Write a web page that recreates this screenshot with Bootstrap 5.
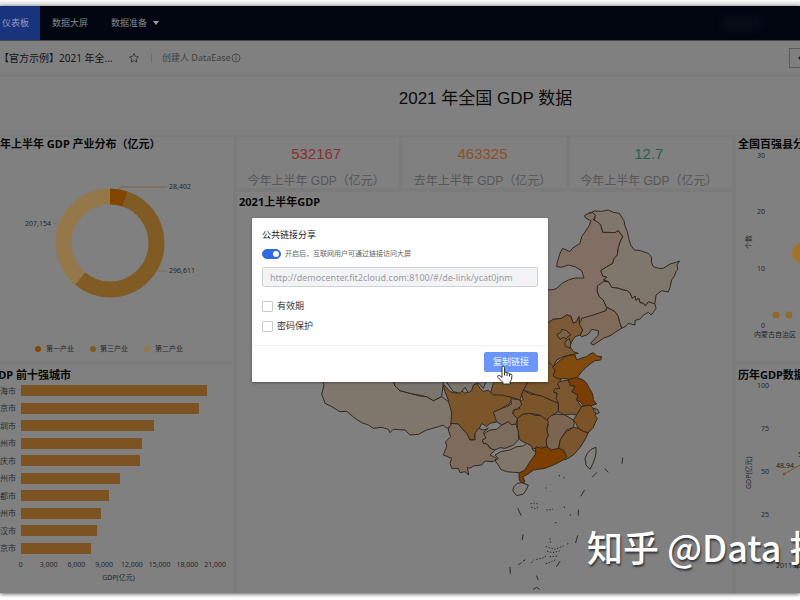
<!DOCTYPE html>
<html lang="zh-CN">
<head>
<meta charset="utf-8">
<meta name="viewport" content="width=device-width, initial-scale=1">
<title>2021 年全国 GDP 数据</title>
<link href="https://cdn.jsdelivr.net/npm/bootstrap@5.3.0/dist/css/bootstrap.min.css" rel="stylesheet">
<style>
body{font-family:"Noto Sans","Noto Sans CJK SC",sans-serif;font-size:9px;line-height:14px;background:#fff;color:#1c1c1c}
.app-shell{overflow:hidden;min-height:100vh;padding:6px 0;background:linear-gradient(#fdfdfd,#d9d9d9 6px,#fff 7px)}
.app-frame{background:#7b7b7b;box-shadow:0 1px 4px #555}
.topbar{background:#020611;height:35px;border-bottom:1px solid #45474c}
.topbar a{color:#84868b;text-decoration:none;height:34px}
.topbar .tab-on{background:#17347c;color:#8c9cc4;width:40px;padding-left:2px}
.topbar .tab-screen{padding-left:12px}
.topbar .tab-prep{padding-left:23px}
.caret{width:0;height:0;border:3px solid transparent;border-top:4px solid #9a9a9a;border-bottom:0;margin-left:6px}
.user-name{width:36px;height:10px;background:#0c101b;filter:blur(4px);margin-right:40px}
.toolbar{background:#808080;height:33px;margin-bottom:3px}
.board-name{font-size:10px;color:#141414;margin-left:-1px;width:124px}
.split{width:1px;height:10px;background:#6d6d6d;margin:0 10px 0 10px}
.author{color:#404040;letter-spacing:normal}
.tool-btn{width:30px;height:20px;border:1px solid #5c5c5c;background:transparent;margin-right:-19px;padding:0;color:#222}
.board-title{background:#808080;height:57px;margin:0 0 3px;font:17px/44px "Liberation Sans","Noto Sans CJK SC",sans-serif;color:#0c0c0c;padding-left:171px}
.board{display:grid;grid-template-columns:minmax(0,233fr) minmax(0,495fr) minmax(0,64fr);gap:4px}
.panel{background:#808080;overflow:hidden}
.panel svg{display:block;width:100%;height:auto}
.panel h2{font-size:11px;line-height:14px;font-weight:700;color:#080808;margin:0;white-space:nowrap}
.pad-top{padding-top:3px}
.indent{padding-left:2px}
.cut{display:flex;justify-content:flex-end;overflow:hidden;white-space:nowrap}
.h-cities{width:71px}
.kpi{height:51px;text-align:center;font-family:"Liberation Sans","Noto Sans CJK SC",sans-serif;padding:8px 4px 0 0}
.kpi b{display:block;font-size:15px;line-height:18px;font-weight:400}
.kpi span{display:block;font-size:12px;line-height:18px;margin-top:9px;color:#565656;white-space:nowrap}
.c-red{color:#88302c}.c-orange{color:#8d5125}.c-green{color:#1f6350}
.bars{height:175px;font-size:8px}
.bars .city{width:16px;margin-right:5px;color:#2a2a2a}
.bars .track{flex:1;margin-right:18px}
.bars .fill{height:11px;background:#7d5321}
.ticks{margin:1px 4px 0 7px;font-size:7px;color:#262626}
.ticks span{flex:1 1 0;text-align:center}
.axis-name{font-size:7px;color:#262626;line-height:12px;padding:0 0 9px 4px}
svg text{font-size:7px;fill:#262626}
.share-layer{position:absolute;top:0;left:0;width:100%;padding-top:218px}
.share{width:296px;background:#fff;color:#333;box-shadow:0 1px 3px rgba(0,0,0,.4);border-radius:1px}
.share-body{padding:10px 10px 0}
.share h1{font-size:9px;line-height:14px;font-weight:400;margin:0;color:#222}
.share .form-check-input{margin:0;flex:none}
.share .form-switch{padding:0;min-height:0;margin:5px 0 6px}
.share .form-switch .form-check-input{width:19px;height:10px;background-color:#3068e4;border-color:#3068e4}
.hint{font-size:7px;color:#666;margin-left:4px}
.share .form-control{font-size:9px;line-height:12px;height:20px;padding:0 7px;border-radius:2px;color:#999ca3;background:#f2f3f5;border-color:#cfd1d5;font-family:"Noto Sans",sans-serif}
.checks{margin-top:12px}
.checks .form-check{padding:0;min-height:0;margin:0 0 6px}
.checks .form-check-input{width:11px;height:11px;border-radius:1px;border-color:#c8cad0}
.checks label{margin-left:4px}
.share-foot{border-top:1px solid #f0f0f0;padding:6px 10px 10px;margin-top:12px}
.share .btn{font-size:9px;line-height:18px;padding:0 8px;border-radius:2px;background:#6b95f7;border-color:#6b95f7;color:#f1f5ff}
.pointer{position:absolute;left:12px;top:13px;width:17px;height:20px}
.stamp{position:absolute;right:0;bottom:27px;width:213px;height:54px;overflow:hidden;white-space:nowrap;color:#fff;font:500 36px/54px "Noto Sans CJK SC",sans-serif;text-shadow:1px 2px 2px rgba(0,0,0,.6)}
</style>
<script src="https://cdn.jsdelivr.net/npm/bootstrap@5.3.0/dist/js/bootstrap.bundle.min.js"></script>
</head>
<body>
<div class="app-shell position-relative">
<div class="app-frame">
  <nav class="topbar d-flex align-items-center">
    <a href="#" class="tab-on d-flex align-items-center text-nowrap">仪表板</a>
    <a href="#" class="tab-screen d-flex align-items-center">数据大屏</a>
    <a href="#" class="tab-prep d-flex align-items-center">数据准备<i class="caret"></i></a>
    <div class="user-name ms-auto"></div>
  </nav>
  <header class="toolbar d-flex align-items-center">
    <div class="board-name text-nowrap">【官方示例】2021 年全...</div>
    <svg class="ms-1 me-0" width="14" height="12" viewBox="0 0 14 12" fill="none" stroke="#3c3c3c"><path d="M7 1.5l1.400 2.900 3.100.4-2.200 2.200.5 3.100L7 8.600l-2.800 1.500.5-3.100-2.200-2.200 3.100-.4z"/></svg>
    <i class="split"></i>
    <div class="author text-nowrap">创建人 DataEase</div>
    <svg style="margin-left:0" width="10" height="10" viewBox="0 0 10 10" fill="none" stroke="#444" stroke-width=".9"><circle cx="5" cy="5" r="4"/><path d="M5 4.300v3M5 2.400v1"/></svg>
    <button type="button" class="tool-btn ms-auto" aria-label="收起"><svg width="12" height="10" viewBox="0 0 12 10" fill="none" stroke="#222" stroke-width="1.400"><path d="M4 2L1 5l3 3"/></svg></button>
  </header>
  <div class="board-title text-center">2021 年全国 GDP 数据</div>

  <main class="board">
    <div class="d-flex flex-column gap-1">
      <section class="panel">
        <h2>年上半年 GDP 产业分布（亿元）</h2>
        <svg viewBox="0 151 233 210" role="img" aria-label="产业分布">
          <g fill="none" stroke-width="16" transform="rotate(-90 110 243)">
            <circle cx="110" cy="243" r="46.5" stroke="#94784a" pathLength="100" stroke-dasharray="39 61" stroke-dashoffset="-61"/>
            <circle cx="110" cy="243" r="46.5" stroke="#805b24" pathLength="100" stroke-dasharray="55.8 44.2" stroke-dashoffset="-5.3"/>
            <circle cx="110" cy="243" r="46.5" stroke="#824600" pathLength="100" stroke-dasharray="5.3 94.7"/>
          </g>
          <path d="M118 189l4-2h45" stroke="#805438" fill="none" stroke-width=".7"/>
          <path d="M157 271h10M53 223l4 1" stroke="#806b48" fill="none" stroke-width=".7"/>
          <text x="169" y="189">28,402</text><text x="25" y="226">207,154</text><text x="169" y="273">296,611</text>
          <circle cx="38" cy="349" r="3" fill="#824600"/><circle cx="93" cy="349" r="3" fill="#805b24"/><circle cx="147" cy="349" r="3" fill="#94784a"/>
          <text x="46" y="351">第一产业</text><text x="100" y="351">第三产业</text><text x="155" y="351">第二产业</text>
        </svg>
      </section>
      <section class="panel pad-top flex-grow-1">
        <h2 class="cut h-cities">GDP 前十强城市</h2>
        <div class="bars d-flex flex-column justify-content-around">
          <div class="d-flex align-items-center"><span class="city cut">上海市</span><div class="track"><div class="fill" style="width:95.7%"></div></div></div>
          <div class="d-flex align-items-center"><span class="city cut">北京市</span><div class="track"><div class="fill" style="width:91.6%"></div></div></div>
          <div class="d-flex align-items-center"><span class="city cut">深圳市</span><div class="track"><div class="fill" style="width:68.4%"></div></div></div>
          <div class="d-flex align-items-center"><span class="city cut">广州市</span><div class="track"><div class="fill" style="width:62.3%"></div></div></div>
          <div class="d-flex align-items-center"><span class="city cut">重庆市</span><div class="track"><div class="fill" style="width:61.5%"></div></div></div>
          <div class="d-flex align-items-center"><span class="city cut">苏州市</span><div class="track"><div class="fill" style="width:50.8%"></div></div></div>
          <div class="d-flex align-items-center"><span class="city cut">成都市</span><div class="track"><div class="fill" style="width:45.6%"></div></div></div>
          <div class="d-flex align-items-center"><span class="city cut">杭州市</span><div class="track"><div class="fill" style="width:41.1%"></div></div></div>
          <div class="d-flex align-items-center"><span class="city cut">武汉市</span><div class="track"><div class="fill" style="width:39.1%"></div></div></div>
          <div class="d-flex align-items-center"><span class="city cut">南京市</span><div class="track"><div class="fill" style="width:36.2%"></div></div></div>
        </div>
        <div class="ticks d-flex"><span>0</span><span>3,000</span><span>6,000</span><span>9,000</span><span>12,000</span><span>15,000</span><span>18,000</span><span>21,000</span></div>
        <div class="axis-name text-center">GDP(亿元)</div>
      </section>
    </div>

    <div class="d-flex flex-column gap-1">
      <div class="d-flex gap-1">
        <div class="panel kpi flex-fill"><b class="c-red">532167</b><span>今年上半年 GDP（亿元）</span></div>
        <div class="panel kpi flex-fill"><b class="c-orange">463325</b><span>去年上半年 GDP（亿元）</span></div>
        <div class="panel kpi flex-fill"><b class="c-green">12.7</b><span>今年上半年 GDP（亿元）</span></div>
      </div>
      <section class="panel pad-top flex-grow-1">
        <h2 class="indent">2021上半年GDP</h2>
        <svg viewBox="711 627 1485 1149" role="img" aria-label="2021上半年GDP 地图">
          <g stroke="#33291e" stroke-width="3" stroke-linejoin="round">
            <g transform="translate(1620 600)">
              <path fill="#80776c" d="M146 40L165 33 185 34 205 30 220 37 238 40 252 62 255 78 262 95 266 115 272 135 283 150 297 151 310 155 325 160 335 172 334 186 340 200 355 205 370 205 390 192 405 188 419 183 411 194 413 208 408 215 402 230 395 240 390 262 385 276 365 272 348 285 345 310 337 312 325 305 316 318 310 310 300 308 296 294 288 302 285 288 277 295 270 280 262 272 250 270 235 265 215 262 205 245 190 240 200 232 188 228 182 212 200 200 218 190 222 175 232 165 234 145 240 125 248 110 235 92 225 98 210 97 188 97 182 75 172 65 163 70 165 45Z"/>
              <path fill="#806f62" d="M138 55L133 47 146 40 158 38 167 46 160 60 172 65 182 75 188 97 225 98 235 92 248 110 240 125 234 145 232 165 222 175 218 190 200 200 182 212 188 228 200 232 190 240 205 245 190 255 172 258 172 275 178 290 190 300 200 322 198 332 180 340 160 345 140 353 125 358 126 375 118 372 117 350 110 365 100 370 92 348 80 345 65 355 40 358 22 370-60 400-60 310 0 290 22 270 40 269 50 265 68 249 85 240 105 234 132 234 125 212 105 200 85 195 65 202 50 200 52 185 60 160 68 145 90 155 97 145 120 130 125 110 138 92 148 76 153 62Z"/>
              <path fill="#80786e" d="M190 245L205 245 215 262 235 265 250 270 262 272 270 280 277 295 285 288 288 302 296 294 300 308 310 310 316 318 325 305 345 312 348 325 340 337 333 345 325 337 310 345 300 357 285 361 285 375 265 370 258 378 245 385 238 365 235 350 225 335 213 328 200 322 190 300 178 290 172 275 172 258Z"/>
              <path fill="#806b5b" d="M200 322L213 328 225 335 235 350 238 365 245 385 225 397 215 405 190 415 175 425 160 435 152 430 175 405 175 392 155 388 147 400 140 405 125 410 120 405 128 390 112 378 122 365 125 355 160 345 198 332Z"/>
              <path fill="#7c5a35" d="M22 370L40 358 65 355 80 345 92 348 100 370 110 365 117 350 118 372 128 390 120 405 105 410 95 425 90 440 100 455 115 460 90 465 70 470 50 480 40 500 20 505-30 510-60 400Z"/>
              <path fill="#7b6348" d="M50 403L62 398 65 388 80 392 92 405 83 410 78 417 70 412 60 418ZM75 425L88 415 92 430 90 445 75 438Z"/>
            </g>
            <g transform="translate(1290 1020)">
              <path fill="#7b552d" d="M180 165L190 130 200 60 350 60 400 110 388 125 390 145 370 155 380 160 385 190 350 175 320 165 280 150 270 180 245 172Z"/>
              <path fill="none" d="M280 150L295 125 290 100"/>
              <path fill="#804b0d" d="M385 65L405 50 423 45 435 45 440 60 455 54 470 50 480 42 490 38 500 48 515 50 512 60 495 62 480 72 470 80 455 95 440 115 420 118 400 115 385 117 370 108 375 90 368 82Z"/>
              <path fill="#7a3d05" d="M412 120L440 112 460 120 470 130 478 145 488 162 490 180 500 192 480 198 460 198 452 186 440 180 443 165 425 155 435 140 420 136Z"/>
              <path fill="#7c562f" d="M388 125L415 120 420 136 435 140 425 155 443 165 440 180 455 200 440 225 425 222 405 225 385 215 385 190 378 175 382 160 370 155 375 147 390 145 382 132Z"/>
              <path fill="#7d5225" d="M440 225L455 200 480 195 498 215 495 226 502 235 495 250 490 262 475 278 460 275 445 265 438 250 430 240Z"/>
              <path fill="#7b552d" d="M430 262L445 265 460 275 475 278 468 293 455 315 448 325 430 345 405 360 385 330 390 300 400 285 410 275Z"/>
              <path fill="#7d6450" d="M350 240L365 226 380 222 405 225 430 240 433 250 430 262 410 270 400 285 390 300 385 330 370 333 352 330 348 300 355 285 350 270 355 255Z"/>
              <path fill="#7b552a" d="M262 235L280 222 300 220 315 226 345 228 355 245 350 270 355 285 348 300 352 330 335 320 325 332 315 325 300 330 298 315 285 308 270 300 265 280 262 265Z"/>
              <path fill="#7b552a" d="M262 190L280 178 275 165 280 150 300 162 320 165 335 168 350 175 385 190 385 215 365 226 350 240 330 225 300 220 280 222 262 235 248 222 255 208 270 206Z"/>
              <path fill="#7d3f00" d="M318 320L335 325 350 320 365 330 385 325 400 330 410 350 400 360 370 375 345 385 310 390 290 405 278 410 285 425 275 430 268 420 267 400 285 390 300 365 315 345Z"/>
              <path fill="#80776a" d="M195 345L212 335 240 330 260 320 280 318 290 310 305 318 308 330 318 335 315 345 300 365 285 390 270 398 250 397 230 395 212 388 205 375 195 362 205 356Z"/>
              <path fill="#7c6c5e" d="M157 285L170 276 180 270 200 268 215 255 235 245 245 254 258 252 265 275 265 300 250 315 225 325 210 323 195 330 185 328 172 313 160 310 157 300 165 294Z"/>
              <path fill="#7b6550" d="M188 215L205 210 215 205 230 200 245 192 240 175 270 180 275 195 262 206 250 210 248 222 262 235 258 252 245 254 235 245 215 255 200 245 190 248Z"/>
              <path fill="#7b562b" d="M38 130L60 155 80 160 92 145 103 160 115 155 118 138 130 130 142 132 150 145 160 155 175 150 190 165 215 165 245 172 240 190 215 205 190 217 200 245 180 250 170 260 155 250 145 272 135 280 135 300 120 300 110 280 95 265 85 252 60 250 65 225 55 200 55 180 45 155Z"/>
              <path fill="#7f6b5c" d="M60 250L85 252 95 265 110 280 120 300 135 300 135 280 145 265 160 270 175 265 160 278 168 294 157 300 160 310 172 313 180 325 195 330 180 345 200 355 190 365 165 363 155 375 130 378 120 385 112 382 116 405 105 395 90 398 85 385 65 385 60 370 65 355 40 345 50 320 47 305 62 290 55 270Z"/>
              <path fill="#6c6c68" d="M490 205L502 208 508 218 500 222 492 214Z"/>
            </g>
            <g transform="translate(930 1110)">
              <path fill="#80776c" d="M25 0L42 45 35 73 40 85 45 100 60 107 90 125 110 124 135 145 155 158 175 165 190 175 215 172 235 178 240 188 250 178 285 180 300 195 325 193 350 180 385 170 400 165 410 175 422 168 425 130 420 110 415 95 395 80 370 92 350 80 330 78 300 70 270 62 255 48 240 0Z"/>
              <path fill="#7a756d" d="M255 48L270 62 300 70 350 80 370 92 395 80 400 40 395 0 240 0ZM405 30L430 65 450 70 465 52 475 68 485 62 490 45 505 38 520 55 530 30Z"/>
              <path fill="#808078" d="M612 350L622 340 635 338 655 345 650 358 640 372 620 377 608 362Z"/>
              <path fill="#80807d" d="M825 265L832 250 843 238 858 232 858 252 850 278 840 298 828 285Z"/>
            </g>
          </g>
          <g transform="translate(1440 1410)" fill="none" stroke="#2a2a2a" stroke-width="3" stroke-linecap="round">
            <path d="M350 8L337 21M313 61L303 78M114 116L123 136M295 120V136M129 194L127 209M293 197L287 218M240 274L230 289M90 292L91 311M170 318L174 329M160 358L170 352 178 357M116 284L124 278M130 273L135 270M426-20L428-36M384 6L375-4"/>
            <path stroke-dasharray="2 7" d="M153 101L163 99 172 101M155 112L166 116 175 111M200 120L218 118M210 206L212 218M198 230L225 238 250 228M202 244L218 248 238 243M155 278L160 270M170 268L188 264 198 258M198 281L212 277 225 270M210 260L235 258M262 222L270 218M238 16V18M252 22V25M196 54H200M253 111V113M271 134V136M226 158H228"/>
          </g>
        </svg>
      </section>
    </div>

    <div class="d-flex flex-column gap-1">
      <section class="panel">
        <h2 class="indent">全国百强县分布</h2>
        <svg viewBox="736 151 64 210" role="img" aria-label="全国百强县分布">
          <text x="757" y="158">30</text><text x="757" y="214">20</text><text x="757" y="271">10</text><text x="761" y="328">0</text>
          <text transform="translate(751 249) rotate(-90)">个数</text>
          <circle cx="802" cy="253" r="10" fill="#a17428"/><circle cx="776" cy="315" r="3.500" fill="#8f6a2c"/><circle cx="789" cy="315" r="3.500" fill="#8f6a2c"/>
          <text x="754" y="337">内蒙古自治区</text>
        </svg>
      </section>
      <section class="panel pad-top flex-grow-1">
        <h2 class="indent">历年GDP数据</h2>
        <svg viewBox="736 382 64 211" role="img" aria-label="历年GDP数据">
          <text x="757" y="388">100</text><text x="761" y="431">75</text><text x="761" y="474">50</text><text x="761" y="517">25</text>
          <text transform="translate(751 489) rotate(-90)">GDP(亿元)</text>
          <path d="M784 474L802 464" stroke="#80531c" fill="none"/><circle cx="784" cy="474" r="1.500" fill="#80531c"/>
          <text x="776" y="468">48.94</text><text x="798" y="457">5</text><text x="776" y="568">2011 年</text>
        </svg>
      </section>
    </div>
  </main>
</div>

<div class="share-layer d-flex justify-content-center">
  <div class="share" role="dialog" aria-labelledby="shareTitle">
    <div class="share-body">
      <h1 id="shareTitle">公共链接分享</h1>
      <div class="form-check form-switch d-flex align-items-center">
        <input class="form-check-input" type="checkbox" role="switch" id="shareOn" checked>
        <label class="hint" for="shareOn">开启后，互联网用户可通过链接访问大屏</label>
      </div>
      <input class="form-control" type="text" aria-label="链接" readonly value="http://democenter.fit2cloud.com:8100/#/de-link/ycat0jnm">
      <div class="checks">
        <div class="form-check d-flex align-items-center"><input class="form-check-input" type="checkbox" id="expiry"><label for="expiry">有效期</label></div>
        <div class="form-check d-flex align-items-center"><input class="form-check-input" type="checkbox" id="secret"><label for="secret">密码保护</label></div>
      </div>
    </div>
    <div class="share-foot d-flex justify-content-end">
      <div class="position-relative">
        <button type="button" class="btn">复制链接</button>
        <svg class="pointer" viewBox="0 0 17 20" fill="#fff" stroke="#333" stroke-width="1" stroke-linejoin="round"><path d="M6 11V2.500Q6 1 7.200 1T8.500 2.500V7.500Q10.500 6.500 11 8 13 7.200 13.500 9 16 8.500 16 10.500 16 15 14 17V19H7V17.500L2 12.500Q1 11 2.300 10.300 3.500 10 6 12.500Z"/><path d="M8.500 7.500v3M11 8v3M13.500 9v2.500" fill="none"/></svg>
      </div>
    </div>
  </div>
</div>
<div class="stamp">知乎 @Data 技术</div>
</div>
</body>
</html>
